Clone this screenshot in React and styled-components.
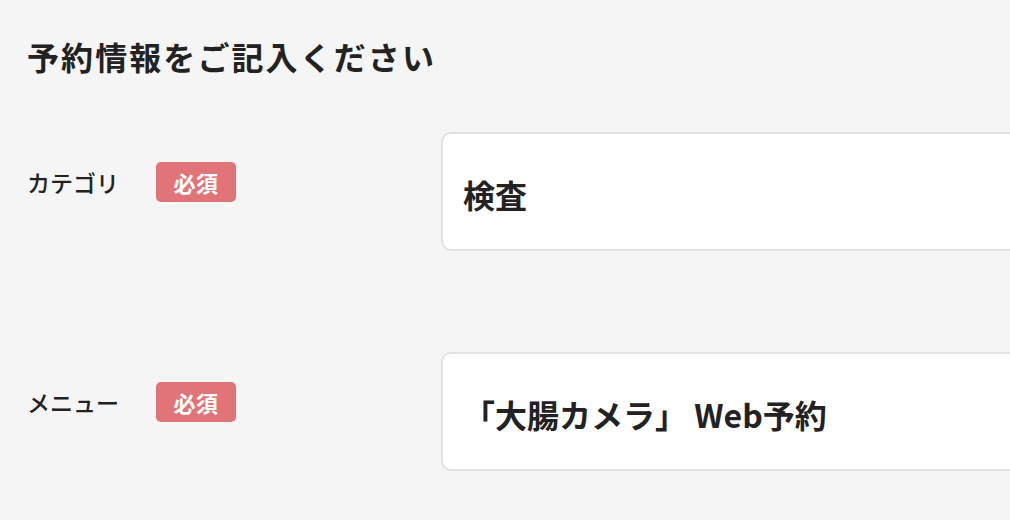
import React from "react";
import styled, { createGlobalStyle } from "styled-components";

const Global = createGlobalStyle`
  html, body { margin: 0; padding: 0; background: #f5f5f5; overflow: hidden; }
  body { font-family: "Noto Sans CJK JP", "Noto Sans", sans-serif; color: #222; }
`;

const Page = styled.div`
  width: 1010px;
  height: 520px;
  overflow: hidden;
  padding: 35px 0 0 27px;
  box-sizing: border-box;
`;

const Heading = styled.h2`
  margin: 0 0 55px;
  font-size: 32px;
  font-weight: 700;
  line-height: 42px;
  letter-spacing: 0.065em;
  color: #222;
  white-space: nowrap;
`;

const Form = styled.div`
  display: flex;
  flex-direction: column;
  gap: 101px;
`;

const Row = styled.div`
  display: flex;
  align-items: flex-start;
`;

const LabelCell = styled.div`
  width: 414px;
  flex: none;
  display: flex;
  align-items: center;
  gap: 29px;
  padding-top: 30px;
`;

const Label = styled.span`
  font-size: 23px;
  font-weight: 500;
  line-height: 40px;
  color: #222;
  min-width: 100px;
  white-space: nowrap;
`;

const Badge = styled.span`
  display: inline-flex;
  align-items: center;
  justify-content: center;
  width: 80px;
  height: 40px;
  border-radius: 5px;
  background: #e07478;
  color: #fff;
  font-size: 22px;
  font-weight: 700;
  letter-spacing: 0.02em;
`;

const Field = styled.div`
  flex: none;
  width: 700px;
  height: 119px;
  box-sizing: border-box;
  background: #fff;
  border: 2px solid #e2e2e2;
  border-radius: 10px;
  display: flex;
  align-items: center;
  padding: 4px 20px 0;
  font-size: 32px;
  font-weight: 700;
  color: #222;
  white-space: nowrap;
`;

export default function App() {
  return (
    <>
      <Global />
      <Page>
        <Heading>予約情報をご記入ください</Heading>
        <Form>
          <Row>
            <LabelCell>
              <Label>カテゴリ</Label>
              <Badge>必須</Badge>
            </LabelCell>
            <Field>検査</Field>
          </Row>
          <Row>
            <LabelCell>
              <Label>メニュー</Label>
              <Badge>必須</Badge>
            </LabelCell>
            <Field>「大腸カメラ」 Web予約</Field>
          </Row>
        </Form>
      </Page>
    </>
  );
}
